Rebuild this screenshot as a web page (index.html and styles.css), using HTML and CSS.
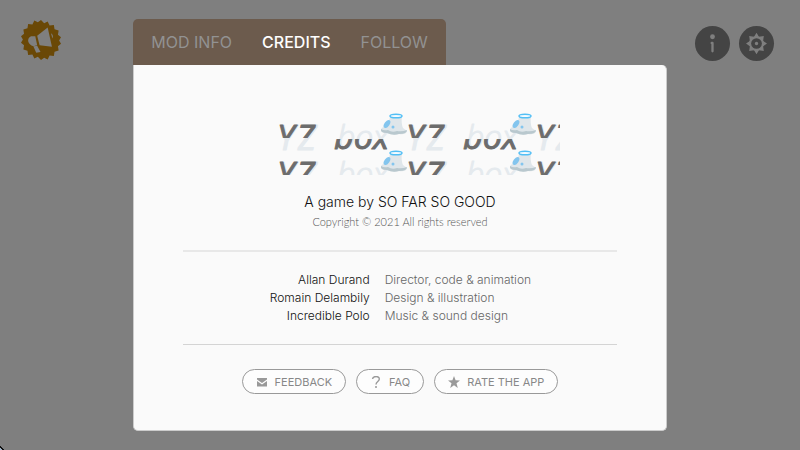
FILE: index.html
```html
<!DOCTYPE html>
<html lang="en">
<head>
  <meta charset="UTF-8">
  <meta name="viewport" content="width=device-width, initial-scale=1">
  <title>Credits</title>
  <link rel="stylesheet" href="styles.css">
</head>
<body>
  <header class="topbar">
    <button class="icon-btn news-btn" aria-label="News">
      <svg viewBox="0 0 42 42" width="40" height="40">
        <path fill="#6a4806" d="M21 0l3.300 3.300L28 1.500l2 4.200 4.500-.5.700 4.500 4.300 1.300-.7 4.400 3.200 2.600-2 3.500 2 3.500-3.200 2.600.7 4.400-4.300 1.300-.7 4.500-4.500-.5-2 4.200-3.700-1.800L21 42l-3.300-3.300-3.700 1.800-2-4.200-4.500.5-.7-4.500-4.300-1.300.7-4.400L0 24l2-3.500L0 17l3.200-2.600-.7-4.400 4.300-1.300.7-4.500 4.500.5 2-4.200 3.700 1.800z"/>
        <g fill="#7f7f7f">
          <path d="M28 8L32.500 28 19.500 26.500 17 16.500z"/>
          <path d="M15 17L17 26.500 13 27.500C7 26 5.500 19 10.500 17z"/>
          <path d="M13 27.500l4-.5 3.500 6.500-4.500 1z"/>
          <path d="M31.500 14q3 2 1.500 5.500z"/>
        </g>
      </svg>
    </button>
    <div class="topbar-right">
      <button class="icon-btn round-btn" aria-label="Information">
        <svg viewBox="0 0 36 36" width="35" height="35">
          <circle cx="18" cy="11" r="2.500" fill="#7f7f7f"/>
          <path d="M17.200 17.500H18v8.500" fill="none" stroke="#7f7f7f" stroke-width="2.400" stroke-linecap="round" stroke-linejoin="round"/>
        </svg>
      </button>
      <button class="icon-btn round-btn" aria-label="Settings">
        <svg viewBox="0 0 36 36" width="35" height="35">
          <path fill="#7f7f7f" d="M18 7l2.500 4 5-.7-.7 5 4 2.700-4 2.700.7 5-5-.7L18 29l-2.500-4-5 .7.7-5-4-2.700 4-2.700-.7-5 5 .7z"/>
          <circle cx="18" cy="18" r="7.500" fill="#7f7f7f"/>
          <circle cx="18" cy="18" r="5.500" fill="#444"/>
          <circle cx="18" cy="18" r="1.700" fill="#7f7f7f"/>
        </svg>
      </button>
    </div>
  </header>

  <main class="dialog">
    <nav class="tabs">
      <button class="tab">MOD INFO</button>
      <button class="tab active">CREDITS</button>
      <button class="tab">FOLLOW</button>
    </nav>

    <section class="panel">
      <!-- Repeating logo -->
      <svg class="logo" viewBox="0 0 320 64" width="320" height="64" role="img" aria-label="YZ box">
        <defs>
          <clipPath id="upper"><rect x="0" y="0" width="130" height="27"/></clipPath>
          <clipPath id="lower"><rect x="0" y="28" width="130" height="20"/></clipPath>
          <g id="tile">
            <g class="logo-text logo-pale">
              <text x="1" y="39">Y</text>
              <text x="21" y="39">Z</text>
              <text class="logo-box" x="60" y="37">box</text>
            </g>
            <g class="logo-text logo-dark">
              <text x="0" y="39" clip-path="url(#upper)">Y</text>
              <text x="19" y="39" clip-path="url(#upper)">Z</text>
            </g>
          </g>
          <g id="box">
            <text class="logo-text logo-dark" x="57" y="38" clip-path="url(#lower)">box</text>
          </g>
          <g id="cloud">
            <path d="M113 5L125 5Q124 13 126 17L130 20Q129 24 122 23Q116 25 110 22Q103 22 104 18L109 13Q113 10 113 5z" fill="#dfe6ea"/>
            <path d="M104 18Q107 20 111 19Q115 22 120 20Q125 21 130 19Q130 23 122 23Q116 25 110 22Q103 22 104 18z" fill="#b9c8ce"/>
            <ellipse cx="110" cy="13" rx="2.500" ry="4.500" transform="rotate(35 110 13)" fill="#83c5ee"/>
            <circle cx="116" cy="16" r="1.500" fill="#83c5ee"/>
            <ellipse cx="119" cy="5" rx="6" ry="1.800" fill="#f4fbff" stroke="#52bff5" stroke-width="1.500"/>
          </g>
        </defs>
        <g transform="translate(37 0)">
          <use href="#tile"/>
          <use href="#tile" x="129"/>
          <use href="#tile" x="258"/>
          <use href="#tile" y="37"/>
          <use href="#tile" x="129" y="37"/>
          <use href="#tile" x="258" y="37"/>
          <use href="#box"/>
          <use href="#box" x="129"/>
          <use href="#cloud"/>
          <use href="#cloud" x="129"/>
          <use href="#cloud" y="37"/>
          <use href="#cloud" x="129" y="37"/>
        </g>
      </svg>

      <p class="studio">A game by SO FAR SO GOOD</p>
      <p class="copyright">Copyright © 2021 All rights reserved</p>

      <dl class="credits">
        <dt>Allan Durand</dt>
        <dd>Director, code &amp; animation</dd>
        <dt>Romain Delambily</dt>
        <dd>Design &amp; illustration</dd>
        <dt>Incredible Polo</dt>
        <dd>Music &amp; sound design</dd>
      </dl>

      <div class="actions">
        <button class="pill">
          <svg viewBox="0 0 12 12" width="12" height="12">
            <path fill="#999" d="M1 2h10v1.500L6 7 1 3.500zM1 5l5 3.500L11 5v5.500H1z"/>
          </svg>
          FEEDBACK
        </button>
        <button class="pill">
          <svg viewBox="0 0 12 12" width="12" height="12">
            <path fill="none" stroke="#999" stroke-width="1.400" d="M2.500 3C3-.3 9.300-.3 9.300 3 9.300 5.500 6 5.500 6 8.500"/>
            <circle cx="6" cy="11" r="1" fill="#999"/>
          </svg>
          FAQ
        </button>
        <button class="pill">
          <svg viewBox="0 0 12 12" width="12" height="12">
            <path fill="#999" d="M6 0l1.600 4.200 4.400.2-3.500 2.800L9.800 12 6 9.300 2.200 12l1.300-4.800L0 4.400l4.400-.2z"/>
          </svg>
          RATE THE APP
        </button>
      </div>
    </section>
  </main>
  <div class="corner"></div>
</body>
</html>
```

FILE: styles.css
```css
* {
  box-sizing: border-box;
}

body {
  margin: 0;
  min-height: 100vh;
  background-color: #7f7f7f;
  font-family: Inter, "Open Sans", sans-serif;
  font-weight: 300;
  color: #111;
}

button {
  font-family: inherit;
  cursor: pointer;
}

/* Floating buttons above the page */
.topbar {
  position: absolute;
  top: 19px;
  left: 21px;
  right: 26px;
  display: flex;
  justify-content: space-between;
}

.topbar-right {
  display: flex;
  gap: 9px;
  padding-top: 7px;
}

.icon-btn {
  display: block;
  padding: 0;
  border: none;
  background: none;
}

.icon-btn svg {
  display: block;
}

.round-btn {
  width: 35px;
  height: 35px;
  border-radius: 50%;
  background-color: #444;
}

.dialog {
  width: 66.67%;
  margin: 0 auto;
  padding: 19px 0;
}

.tabs {
  display: inline-flex;
  gap: 30px;
  padding: 0 18px;
  vertical-align: top;
  background-color: #6c5b4d;
  border-radius: 5px 5px 0 0;
}

.tab {
  height: 46px;
  padding: 0;
  border: none;
  background: none;
  color: #929292;
  font-size: 16px;
}

.tab.active {
  color: #fff;
  font-weight: 500;
}

.panel {
  padding: 46px 49px 36px;
  background-color: #fafafa;
  border: 1px solid #ccc;
  border-top: none;
  border-radius: 0 5px 5px 5px;
  text-align: center;
}

.logo {
  display: block;
  margin: 0 auto;
}

.logo-text {
  font-family: "Open Sans", sans-serif;
  font-size: 34px;
  font-style: italic;
  font-weight: 400;
  stroke-linejoin: round;
}

.logo-pale {
  fill: #e5eaee;
  stroke: #e5eaee;
}

.logo-box {
  font-size: 32px;
  font-weight: 300;
}

.logo-dark {
  fill: #6c6c6c;
  stroke: #6c6c6c;
}

.studio {
  margin: 16px 0 0;
  font-size: 14px;
  line-height: 22px;
}

.copyright {
  margin: 0 0 19px;
  font-family: Lato, sans-serif;
  font-size: 11px;
  line-height: 18px;
  color: #555;
}

.credits {
  display: grid;
  grid-template-columns: 43% 1fr;
  column-gap: 15px;
  margin: 0;
  padding: 19px 0;
  border-top: 2px solid #e8e8e8;
  border-bottom: 1px solid #d4d4d4;
  font-size: 12px;
  line-height: 18px;
}

.credits dt {
  text-align: right;
}

.credits dd {
  margin: 0;
  text-align: left;
  color: #666;
}

.actions {
  display: flex;
  justify-content: center;
  gap: 10px;
  margin-top: 24px;
}

.pill {
  display: flex;
  align-items: center;
  gap: 7px;
  height: 25px;
  padding: 0 13px;
  border: 1px solid #999;
  border-radius: 13px;
  background-color: #fdfdfd;
  color: #888;
  font-size: 11px;
}

/* Small notch in the window corner */
.corner {
  position: fixed;
  left: 0;
  bottom: 0;
  width: 4px;
  height: 4px;
  background: linear-gradient(45deg, #9fb4c8 30%, #111 30%, #111 50%, transparent 50%);
}
```
